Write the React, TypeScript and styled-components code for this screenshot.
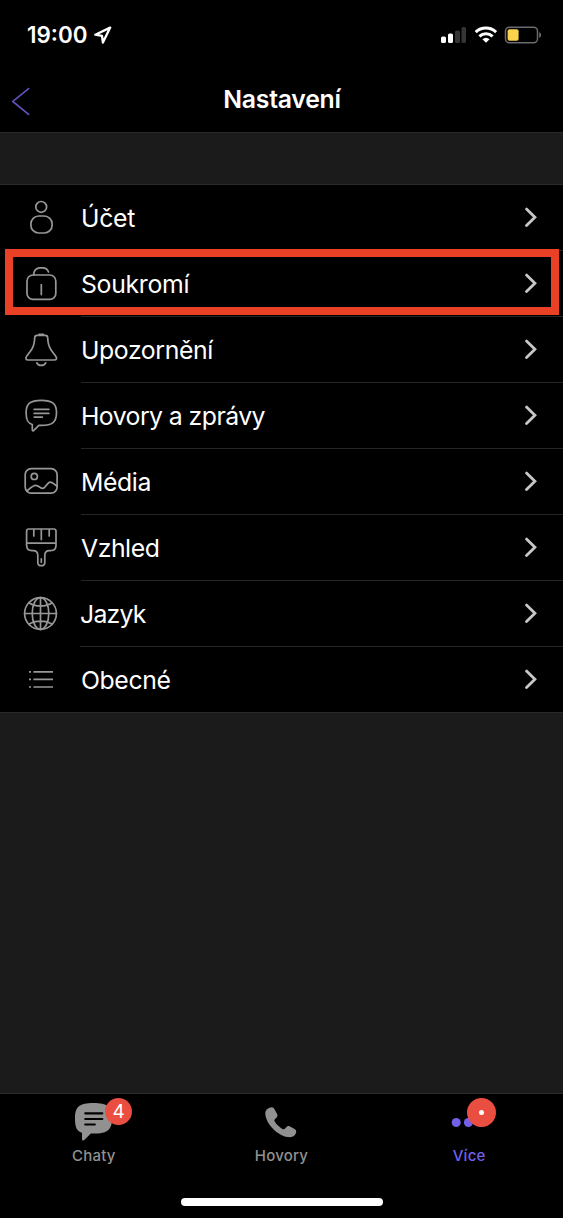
import React from 'react';
import styled, { createGlobalStyle } from 'styled-components';

const GlobalStyle = createGlobalStyle`
  * { box-sizing: border-box; }
  body {
    margin: 0;
    background: #000;
    color: #fff;
    font-family: Inter, 'Liberation Sans', sans-serif;
  }
`;

const Screen = styled.div`
  width: 563px;
  height: 1218px;
  display: flex;
  flex-direction: column;
  background: #1b1b1b;
  overflow: hidden;
`;

const Header = styled.header`
  height: 133px;
  flex: none;
  background: #000;
  border-bottom: 1px solid #2b2b2b;
`;

const StatusBar = styled.div`
  height: 68px;
  display: flex;
  align-items: center;
  justify-content: space-between;
  padding: 2px 21px 0 27px;
`;

const StatusGroup = styled.div<{ $gap: number }>`
  display: flex;
  align-items: center;
  gap: ${(p) => p.$gap}px;
`;

const Time = styled.span`
  font-size: 22.4px;
  line-height: 28px;
  font-weight: 600;
  width: 61px;
  white-space: nowrap;
  letter-spacing: 0;
`;

const NavBar = styled.nav`
  height: 64px;
  display: grid;
  grid-template-columns: 60px 1fr 60px;
  align-items: center;
`;

const Title = styled.h1`
  margin: 0;
  padding: 0 0 2px 1px;
  text-align: center;
  font-size: 24.8px;
  line-height: 32px;
  font-weight: 600;
  letter-spacing: -0.25px;
`;

const List = styled.main`
  flex: none;
  margin-top: 51px;
  background: #000;
  border-top: 1px solid #2b2b2b;
`;

const Row = styled.div`
  position: relative;
  height: 66px;
  display: flex;
  &:last-child { border-bottom: 1px solid #2b2b2b; }
`;

const RowIcon = styled.svg`
  width: 50px;
  height: 66px;
  margin: -1px 0 0 16px;
  flex: none;
  fill: none;
  stroke: #979797;
  stroke-width: 1.7;
  stroke-linecap: round;
  stroke-linejoin: round;
`;

const RowBody = styled.div<{ $shift: number }>`
  flex: 1;
  margin-left: ${(p) => 15 - p.$shift}px;
  display: flex;
  align-items: center;
  justify-content: space-between;
  border-bottom: 1px solid #262626;
  ${Row}:last-child & { border-bottom: none; }
`;

const Label = styled.span<{ $spacing: number }>`
  font-size: 24.8px;
  line-height: 34px;
  letter-spacing: ${(p) => p.$spacing}px;
`;

const Chevron = styled.svg`
  width: 14px;
  height: 22px;
  margin: 0 25px 2px 0;
`;

const Highlight = styled.div`
  position: absolute;
  left: 5px;
  right: 4px;
  top: -2px;
  height: 66px;
  border: 8px solid #ea4025;
`;

const Spacer = styled.div`
  flex: 1;
`;

const TabBar = styled.footer`
  height: 125px;
  flex: none;
  background: #000;
  border-top: 1px solid #2b2b2b;
  display: flex;
  flex-direction: column;
  align-items: center;
`;

const Tabs = styled.div`
  width: 100%;
  display: grid;
  grid-template-columns: repeat(3, 1fr);
  height: 104px;
`;

const Tab = styled.div<{ $active?: boolean }>`
  position: relative;
  display: flex;
  flex-direction: column;
  align-items: center;
  color: ${(p) => (p.$active ? '#7360e8' : '#919191')};
  font-size: 15px;
  line-height: 20px;
  font-weight: 500;
  letter-spacing: 0.25px;
`;

const TabIcon = styled.svg`
  width: 80px;
  height: 52px;
  flex: none;
`;

const Badge = styled.div<{ $size: number; $x: number; $y: number }>`
  position: absolute;
  left: calc(50% + ${(p) => p.$x}px);
  top: ${(p) => p.$y}px;
  width: ${(p) => p.$size}px;
  height: ${(p) => p.$size}px;
  border-radius: 50%;
  background: #ea4e40;
  color: #fff;
  display: flex;
  align-items: center;
  justify-content: center;
  font-size: 19px;
  font-weight: 400;
  letter-spacing: 0;
`;

const Dot = styled.i`
  width: 5px;
  height: 5px;
  border-radius: 50%;
  background: #fff;
`;

const HomeIndicator = styled.div`
  width: 202px;
  height: 8px;
  border-radius: 4px;
  background: #fff;
`;

const rows: { label: string; spacing: number; shift?: number; marked?: boolean; icon: React.ReactNode }[] = [
  {
    label: 'Účet',
    spacing: -0.3,
    icon: (
      <>
        <circle cx="41.2" cy="22.9" r="5.4" />
        <rect x="30.9" y="32" width="21.2" height="17" rx="7.8" />
      </>
    ),
  },
  {
    label: 'Soukromí',
    spacing: -0.3,
    marked: true,
    icon: (
      <>
        <rect x="27" y="25" width="28.8" height="24.4" rx="6" />
        <path d="M33.8 25v-1.2a6 6 0 0 1 6-6h3a6 6 0 0 1 5.7 4.2M41.3 34.6v10" />
      </>
    ),
  },
  {
    label: 'Upozornění',
    spacing: -0.4,
    icon: (
      <>
        <path d="M37.200 19.300h8a2.500 2.500 0 0 1 2.500 2.500c.2 5.200.6 7.800 2.800 11.200 1.500 2.400 3.300 4.600 5.100 7 1.700 2.300 1 4-1.400 4H28.200c-2.400 0-3.100-1.700-1.400-4 1.800-2.400 3.600-4.600 5.100-7 2.200-3.400 2.600-6 2.800-11.200a2.500 2.500 0 0 1 2.500-2.500Z" />
        <path d="M39 18.300h4.400M36.800 46.800c1.500 3.500 7.400 3.500 8.900 0" />
      </>
    ),
  },
  {
    label: 'Hovory a zprávy',
    spacing: -0.56,
    icon: (
      <>
        <path d="M41.300 18.400c-11.200 0-15.200 3.200-15.200 12.400 0 7.200 1.500 10.400 6.200 11.700v5.300c0 1.300 1 1.300 1.800.4l4.800-4.800h2.400c11.200 0 15.200-3.200 15.200-12.600 0-9.200-4-12.400-15.200-12.400Z" />
        <path d="M34.200 27.400h14.600M34.200 31.400h14.600M34.200 35.100h8.200" />
      </>
    ),
  },
  {
    label: 'Média',
    spacing: -0.4,
    icon: (
      <>
        <rect x="25.2" y="20.7" width="31.9" height="24.4" rx="6" />
        <circle cx="34.3" cy="28.4" r="3.1" />
        <path d="M26.800 43.200c3.400-3 6-5.900 8.800-5.900 3.200 0 4.600 3.100 7 3.100 3 0 4.600-6.300 7.600-6.300 2.400 0 3.800 2.200 6.700 4" />
      </>
    ),
  },
  {
    label: 'Vzhled',
    spacing: -0.45,
    icon: (
      <path d="M28.800 15h25a2.200 2.200 0 0 1 2.200 2.200v14c0 3.500-2 5.400-5.400 5.400h-1.200c-3 0-4.600 1.800-4.600 4.800v7c0 4.400-7 4.400-7 0v-7c0-3-1.600-4.800-4.600-4.800H32c-3.400 0-5.400-1.900-5.400-5.400v-14a2.200 2.200 0 0 1 2.200-2.200ZM26.800 29.200h29M33.800 15v7M41.300 15v10.600M49.200 15v7M41.300 44.800v3.400" />
    ),
  },
  {
    label: 'Jazyk',
    spacing: -0.75,
    shift: 1,
    icon: (
      <>
        <circle cx="40.5" cy="33.5" r="15.9" />
        <ellipse cx="40.5" cy="33.5" rx="8.3" ry="15.9" />
        <path d="M40.500 17.600v31.800M24.600 33.500h31.800M28.800 22.700c6.300 4.300 17.100 4.300 23.400 0M28.800 44.300c6.300-4.300 17.100-4.300 23.400 0" />
      </>
    ),
  },
  {
    label: 'Obecné',
    spacing: -0.4,
    icon: (
      <path strokeLinecap="butt" d="M33.400 25.800H53M33.400 33.300H53M33.400 41H53M29 25.800h2M29 33.300h2M29 41h2" />
    ),
  },
];

export default function App() {
  return (
    <Screen>
      <GlobalStyle />
      <Header>
        <StatusBar>
          <StatusGroup $gap={6}>
            <Time>19:00</Time>
            <svg width="18" height="18" viewBox="0 0 18 18" fill="none" stroke="#fff" strokeWidth="2.3" strokeLinejoin="round">
              <path d="M16.200 1.600 1.300 8.700l6.700 1.200.9 6.700Z" />
            </svg>
          </StatusGroup>
          <StatusGroup $gap={7}>
            <svg width="27" height="18" viewBox="0 0 27 18">
              <rect x="2" y="10.5" width="5" height="6.5" rx="1.6" fill="#fff" />
              <rect x="9" y="7.5" width="5" height="9.5" rx="1.6" fill="#fff" />
              <rect x="16" y="4.500" width="5" height="12.500" rx="1.600" fill="#353535" />
              <rect x="22.500" y="1" width="4.500" height="16" rx="1.600" fill="#353535" />
            </svg>
            <svg width="24" height="18" viewBox="-0.7 0 24 18" fill="none" stroke="#fff" strokeWidth="3">
              <path d="M2 6.200a14.800 14.800 0 0 1 20.400 0M5.700 10.300a9.600 9.600 0 0 1 13.200 0" />
              <path d="M12.300 16.800 8.700 13.300a5.400 5.400 0 0 1 7.200 0Z" fill="#fff" stroke="none" />
            </svg>
            <svg width="38" height="18" viewBox="0 0 38 18">
              <rect x="1.500" y="1.200" width="32" height="15.600" rx="4" fill="none" stroke="#6b6b6b" strokeWidth="1.500" />
              <rect x="3.600" y="3.300" width="11" height="11.400" rx="2" fill="#fbd24b" />
              <path d="M35.200 6.200c2.600 1 2.600 4.600 0 5.600Z" fill="#6b6b6b" />
            </svg>
          </StatusGroup>
        </StatusBar>
        <NavBar>
          <svg width="32" height="32" viewBox="0 0 32 32" fill="none" stroke="#6152bd" strokeWidth="1.7" strokeLinecap="round">
            <path d="M28.600 4.600 12.800 17.400l15.800 13" />
          </svg>
          <Title>Nastavení</Title>
        </NavBar>
      </Header>

      <List>
        {rows.map((row) => (
          <Row key={row.label}>
            <RowIcon viewBox="16 0 50 66">{row.icon}</RowIcon>
            <RowBody $shift={row.shift ?? 0}>
              <Label $spacing={row.spacing}>{row.label}</Label>
              <Chevron viewBox="0 0 14 22" fill="none" stroke="#c8c8cb" strokeWidth="2.8" strokeLinecap="round">
                <path d="m2.500 3.100 8.400 8.100-8.400 8.200" />
              </Chevron>
            </RowBody>
            {row.marked && <Highlight />}
          </Row>
        ))}
      </List>

      <Spacer />

      <TabBar>
        <Tabs>
          <Tab>
            <TabIcon viewBox="0 0 80 52">
              <path fill="#919191" d="M39.500 9C25.500 9 21 12.500 21 24.500c0 8.500 1.500 12.700 7 14.300v6.200c0 1.800 1.400 2 2.600.8l6.200-6.200h2.700C53.500 39.600 58 36 58 24.500S53.500 9 39.500 9Z" />
              <path stroke="#000" strokeWidth="2.200" strokeLinecap="round" d="M31.300 19.300h17M31.300 25h17M31.300 30.500h9.500" />
            </TabIcon>
            <span>Chaty</span>
            <Badge $size={27} $x={11.2} $y={4}>4</Badge>
          </Tab>
          <Tab>
            <TabIcon viewBox="-0.8 -0.3 80 52">
              <path fill="#919191" d="M23.500 19c0-3.500 3.600-5.800 6.400-6 1.500 0 2.200.8 2.800 2l2.600 4.800c.7 1.400.4 2.400-.5 3.400l-1.700 1.800c-.6.7-.7 1.500-.2 2.300 1.900 3 4.400 5.400 7.600 7.400.8.5 1.600.5 2.300-.1l1.900-2c1-1 2.200-1.200 3.500-.5l4.600 2.500c1.300.8 1.800 1.700 1.600 3.200-.4 3-3 5.200-6.200 5.200C37 43 23.500 29.500 23.500 19Z" />
            </TabIcon>
            <span>Hovory</span>
          </Tab>
          <Tab $active>
            <TabIcon viewBox="0 0 80 52">
              <g fill="#7360e8">
                <circle cx="27.200" cy="28.500" r="4.500" />
                <circle cx="39.400" cy="28.500" r="4.500" />
                <circle cx="51.600" cy="28.500" r="4.500" />
              </g>
            </TabIcon>
            <span>Více</span>
            <Badge $size={29} $x={-2.4} $y={4}><Dot /></Badge>
          </Tab>
        </Tabs>
        <HomeIndicator />
      </TabBar>
    </Screen>
  );
}
